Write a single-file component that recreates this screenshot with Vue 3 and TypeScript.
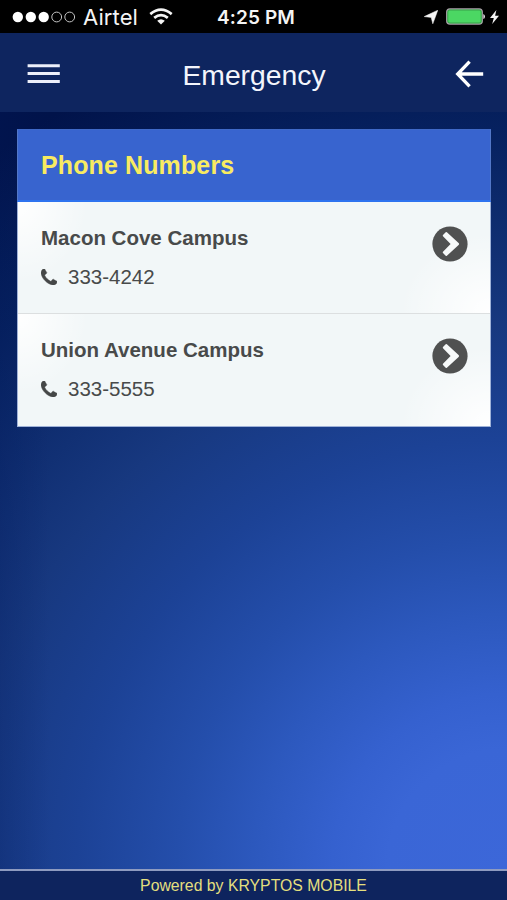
<script setup lang="ts">
interface Contact {
  name: string
  phone: string
}

const contacts: Contact[] = [
  { name: 'Macon Cove Campus', phone: '333-4242' },
  { name: 'Union Avenue Campus', phone: '333-5555' },
]
</script>

<template>
  <div class="screen">
    <div class="status">
      <div class="status-left">
        <svg class="signal" width="64" height="12" viewBox="0 0 64 12">
          <circle cx="5.8" cy="6" r="5.2" fill="#fff" />
          <circle cx="18.8" cy="6" r="5.2" fill="#fff" />
          <circle cx="31.7" cy="6" r="5.2" fill="#fff" />
          <circle cx="44.7" cy="6" r="4.9" fill="none" stroke="#c4c4c4" stroke-width="1" />
          <circle cx="57.7" cy="6" r="4.9" fill="none" stroke="#c4c4c4" stroke-width="1" />
        </svg>
        <span class="carrier">Airtel</span>
        <svg class="wifi" width="24" height="17" viewBox="0 0 24 17">
          <g fill="none" stroke="#f4f4f4" stroke-width="2.7">
            <path d="M1.3 6.1Q12 -2.8 22.7 6.1" />
            <path d="M5.2 9.9Q12 4.2 18.8 9.9" />
          </g>
          <path d="M8.2 12.7Q12 9.6 15.8 12.7L12 16.5Z" fill="#f4f4f4" />
        </svg>
      </div>
      <span class="clock">4:25 PM</span>
      <div class="status-right">
        <svg width="14" height="14" viewBox="0 0 14 14">
          <path d="M13.8 0.2L8.8 13.8L7.2 7.4L0.2 6.6Z" fill="#f4f4f4" stroke="#f4f4f4" stroke-width="0.5" />
        </svg>
        <svg class="battery" width="39" height="17" viewBox="0 0 39 17">
          <rect x="0.7" y="0.9" width="35.6" height="15.2" rx="3.2" fill="#4bd763" stroke="#a99fa8" stroke-width="1.2" />
          <rect x="1.8" y="2" width="33.4" height="13" rx="2" fill="#4bd763" stroke="#2c7a3a" stroke-width="0.6" />
          <path d="M37.3 6Q39 6.5 39 8.5T37.3 11Z" fill="#e6dfe6" />
        </svg>
        <svg width="9" height="14" viewBox="0 0 9 14">
          <path d="M6.4 0L0 7.9H3.8L2.2 14L9 5.8H5.1Z" fill="#f4f4f4" />
        </svg>
      </div>
    </div>

    <header class="bar">
      <button class="icon-button" aria-label="Menu">
        <svg width="33" height="20" viewBox="0 0 33 20">
          <path d="M0.6 1.7H32.8M0.6 9.6H32.8M0.6 17.6H32.8" stroke="#eceffa" stroke-width="3" />
        </svg>
      </button>
      <h1>Emergency</h1>
      <button class="icon-button" aria-label="Back">
        <svg width="29" height="28" viewBox="0 0 29 28">
          <path d="M28.2 14H3M14.6 1.6L2.7 14L14.6 26.4" fill="none" stroke="#fff" stroke-width="3.3" />
        </svg>
      </button>
    </header>

    <main>
      <section class="card">
        <h2>Phone Numbers</h2>
        <ul>
          <li v-for="contact in contacts" :key="contact.phone">
            <div>
              <div class="name">{{ contact.name }}</div>
              <div class="phone">
                <svg width="16" height="16" viewBox="0 0 1408 1408">
                  <path fill="#454747" stroke="#454747" stroke-width="40" d="M1408 1112q0 27-10 70.5t-21 68.5q-21 50-122 106-94 51-186 51-27 0-53-3.5t-57.5-12.5-47-14.5-55.5-20.5-49-18q-98-35-175-83-127-79-264-216t-216-264q-48-77-83-175-3-9-18-49t-20.5-55.5-14.5-47-12.5-57.5-3.5-53q0-92 51-186 56-101 106-122 25-11 68.5-21t70.5-10q14 0 21 3 18 6 53 76 11 19 30 54t35 63.5 31 53.5q3 4 17.5 25t21.5 35.5 7 28.5q0 20-28.5 50t-62 55-62 53-28.5 46q0 9 5 22.5t8.5 20.5 14 24 11.5 19q76 137 174 235t235 174q2 1 19 11.5t24 14 20.5 8.5 22.5 5q18 0 46-28.5t53-62 55-62 50-28.5q14 0 28.5 7t35.5 21.5 25 17.5q25 15 53.5 31t63.5 35 54 30q70 35 76 53 3 7 3 21z" />
                </svg>
                <span>{{ contact.phone }}</span>
              </div>
            </div>
            <svg class="go" width="36" height="36" viewBox="0 0 36 36">
              <circle cx="18" cy="18" r="17.6" fill="#505151" />
              <path
                d="M14.9 6.3L26.6 17Q27.6 18 26.6 19L14.9 29.7Q14.3 30.2 13.7 29.7L11 27Q10.5 26.4 11 25.8L18.6 18L11 10.2Q10.5 9.6 11 9L13.7 6.3Q14.3 5.8 14.9 6.3Z"
                fill="#f7f9f9"
              />
            </svg>
          </li>
        </ul>
      </section>
    </main>

    <footer>Powered by KRYPTOS MOBILE</footer>
  </div>
</template>

<style>
body {
  margin: 0;
}
</style>

<style scoped>
.screen {
  display: flex;
  flex-direction: column;
  width: 507px;
  height: 900px;
  overflow: hidden;
  font-family: "Liberation Sans", Arial, sans-serif;
}

svg {
  display: block;
  flex: none;
}

.status {
  display: grid;
  grid-template-columns: 1fr auto 1fr;
  align-items: center;
  box-sizing: border-box;
  height: 33px;
  padding: 0 8px 0 12px;
  background: #000;
  color: #f4f4f4;
  font-family: Inter, Roboto, sans-serif;
}

.status-left,
.status-right {
  display: flex;
  align-items: center;
}

.carrier {
  margin: 1px 0 0 7px;
  width: 55px;
  font-size: 22px;
  line-height: 32px;
  letter-spacing: 0.1px;
  white-space: nowrap;
}

.wifi {
  margin-left: 11px;
}

.clock {
  padding: 1px 0 0 1px;
  font-size: 19px;
  font-weight: 600;
  letter-spacing: 0.1px;
}

.status-right {
  justify-content: flex-end;
}

.battery {
  margin: 0 5px 0 8px;
}

.bar {
  display: grid;
  grid-template-columns: 60px 1fr 60px;
  align-items: center;
  box-sizing: border-box;
  height: 79px;
  padding: 2px 23px 0 27px;
  background: #0e255f;
  color: #f3f5fc;
}

.icon-button {
  padding: 0;
  border: 0;
  background: none;
}

.icon-button:last-child {
  justify-self: end;
}

h1 {
  margin: 2px 3px 0 0;
  font-size: 28.3px;
  font-weight: 400;
  line-height: 34px;
  text-align: center;
}

main {
  flex: 1;
  padding: 17px 16px 0 17px;
  background:
    linear-gradient(90deg, rgba(0, 24, 92, 0.2), transparent 50px),
    radial-gradient(circle 900px at 100% 100%,
      #3c67d9 0,
      #3a66d6 120px,
      #3561cf 175px,
      #2c58bd 255px,
      #244eab 330px,
      #1c4296 430px,
      #17387f 545px,
      #06215f 740px,
      #01134a 880px);
}

.card {
  box-sizing: border-box;
  height: 298px;
  border: 1px solid #9fb2d8;
  border-top: 0;
}

h2 {
  box-sizing: border-box;
  height: 73px;
  margin: 0 -1px;
  padding: 18px 25px 0 23px;
  border: 1px solid #5277c8;
  border-bottom: 2px solid #2e73ef;
  border-top-color: #3f69c8;
  background: #3864cf;
  color: #f8eb61;
  font-size: 25px;
  line-height: 34px;
  letter-spacing: 0.12px;
}

ul {
  margin: 0;
  padding: 0;
  list-style: none;
}

li {
  display: flex;
  justify-content: space-between;
  box-sizing: border-box;
  height: 111px;
  padding: 24px 22px 0 23px;
  background:
    radial-gradient(ellipse 70px 80px at 0 0, #fff, transparent),
    radial-gradient(ellipse 90px 80px at 100% 100%, #fff, transparent),
    #f2f7f8;
  color: #484a4a;
}

li + li {
  height: 113px;
  border-top: 1px solid #dcdfe0;
}

.name {
  font-size: 20.5px;
  font-weight: 700;
  line-height: 24px;
}

.phone {
  display: flex;
  align-items: center;
  gap: 11px;
  margin-top: 15px;
  font-size: 20.5px;
  line-height: 24px;
}

.phone svg {
  margin-bottom: 1px;
}

footer {
  box-sizing: border-box;
  height: 31px;
  border-top: 2px solid #8e9bc0;
  background: #0e245e;
  color: #e4df7e;
  font-size: 15.8px;
  line-height: 29px;
  text-align: center;
}
</style>
